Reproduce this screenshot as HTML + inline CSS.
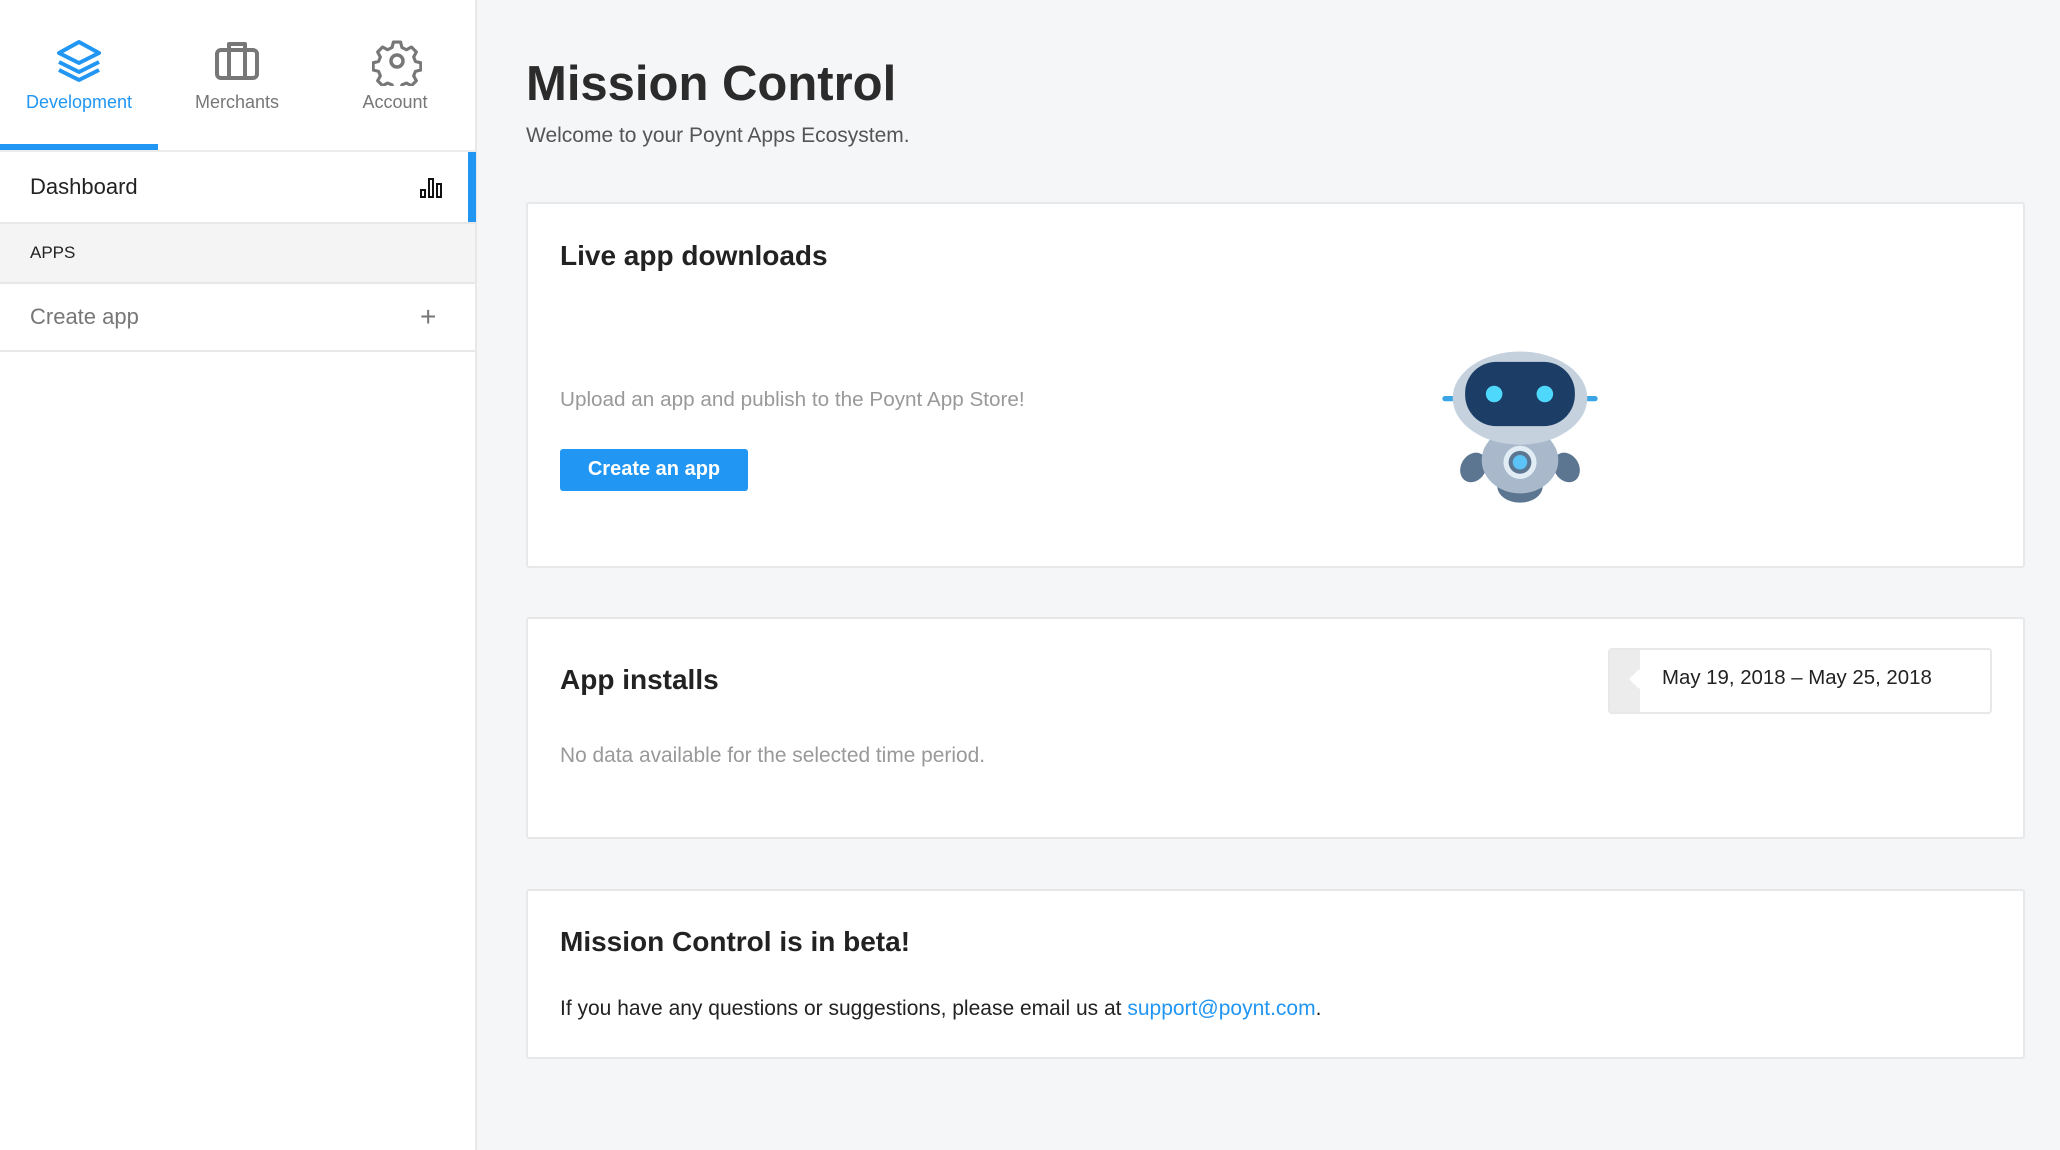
<!DOCTYPE html>
<html><head><meta charset="utf-8"><style>
*{box-sizing:border-box;margin:0;padding:0}
body{width:2060px;height:1150px;background:#f5f6f8;font-family:"Liberation Sans",sans-serif;position:relative;overflow:hidden;color:#222}
.side{position:absolute;left:0;top:0;width:477px;height:1150px;background:#fff;border-right:2px solid #e8e8e8}
.tab{position:absolute;top:0;width:158px;height:150px;text-align:center}
.tab span{position:absolute;top:92px;left:0;width:100%;font-size:18px;color:#777}
.tab svg{position:absolute;top:38px;left:56px}
.row{position:absolute;left:0;width:475px}
.card{position:absolute;left:526px;width:1499px;background:#fff;border:2px solid #e6e8ea;border-radius:3px}
h1{position:absolute;left:526px;top:56px;font-size:49px;font-weight:600;color:#2b2b2b}
h2{position:absolute;left:32px;font-size:28px;font-weight:600;color:#222}
p{position:absolute;left:32px;font-size:21px;color:#999}
</style></head><body>
<div class="side">
 <div class="tab" style="left:0"><svg width="46" height="46" viewBox="0 0 46 46" fill="none" stroke="#2196f3" stroke-width="4" stroke-linejoin="round"><path d="M23 4 L43 15 L23 25 L3 15Z"/><path d="M3 24 L23 34 L43 24"/><path d="M3 32 L23 42 L43 32"/></svg><span style="color:#2196f3">Development</span></div>
 <div style="position:absolute;left:0;top:144px;width:158px;height:6px;background:#2196f3"></div>
 <div class="tab" style="left:158px"><svg width="46" height="46" viewBox="0 0 46 46" fill="none" stroke="#777" stroke-width="4" stroke-linejoin="round"><rect x="3" y="12" width="40" height="28" rx="4"/><path d="M15 12V6h16v6M15 12v28M31 12v28"/></svg><span>Merchants</span></div>
 <div class="tab" style="left:316px"><svg width="50" height="50" viewBox="0 0 50 50" fill="none" stroke="#777" stroke-width="3.5" stroke-linejoin="round" style="left:56px;top:36px"><circle cx="25" cy="25" r="6"/><path d="M21 4h8l1.5 6 5 2.5 5.5-3 5.5 5.5-3 5.5 2 5 6 1.5v8l-6 1.5-2 5 3 5.5-5.5 5.5-5.5-3-5 2-1.5 6h-8l-1.5-6-5-2-5.5 3-5.5-5.5 3-5.5-2-5-6-1.5v-8l6-1.5 2-5-3-5.5 5.5-5.5 5.5 3 5-2.5z" transform="translate(2.5 2.5) scale(0.9)"/></svg><span>Account</span></div>
 <div class="row" style="top:150px;height:2px;background:#ececec"></div>
 <div class="row" style="top:152px;height:70px;font-size:22px;line-height:70px;padding-left:30px;color:#222">Dashboard
  <svg style="position:absolute;left:420px;top:26px" width="24" height="20" viewBox="0 0 24 20" fill="none" stroke="#111" stroke-width="2"><rect x="1" y="12" width="4" height="7"/><rect x="9" y="1" width="4" height="18"/><rect x="17" y="6" width="4" height="13"/></svg>
  <div style="position:absolute;left:468px;top:0;width:8px;height:70px;background:#2196f3"></div></div>
 <div class="row" style="top:222px;height:62px;background:#f4f4f4;border-top:2px solid #e8e8e8;border-bottom:2px solid #e8e8e8;font-size:17px;line-height:58px;padding-left:30px;color:#222">APPS</div>
 <div class="row" style="top:284px;height:68px;border-bottom:2px solid #e8e8e8;font-size:22px;line-height:66px;padding-left:30px;color:#777">Create app<span style="position:absolute;left:420px;font-size:28px;color:#777">+</span></div>
</div>
<h1>Mission Control</h1>
<div style="position:absolute;left:526px;top:124px;font-size:21px;color:#555">Welcome to your Poynt Apps Ecosystem.</div>
<div class="card" style="top:202px;height:366px">
 <h2 style="top:36px">Live app downloads</h2>
 <p style="top:184px;font-size:20.7px">Upload an app and publish to the Poynt App Store!</p>
 <div style="position:absolute;left:32px;top:245px;width:188px;height:42px;background:#2196f3;border-radius:3px;color:#fff;font-size:20px;font-weight:600;text-align:center;line-height:40px">Create an app</div>
 <svg style="position:absolute;left:904px;top:136px" width="176" height="168" viewBox="0 0 170 160">
  <rect x="10" y="53" width="20" height="5" rx="2.5" fill="#3aa5e5"/><rect x="140" y="53" width="20" height="5" rx="2.5" fill="#3aa5e5"/>
  <ellipse cx="63" cy="105" rx="10" ry="14" fill="#5c7590"/><ellipse cx="107" cy="105" rx="10" ry="14" fill="#5c7590"/>
  <ellipse cx="40" cy="122" rx="12" ry="15" fill="#5c7590" transform="rotate(30 40 122)"/><ellipse cx="130" cy="122" rx="12" ry="15" fill="#5c7590" transform="rotate(-30 130 122)"/>
  <ellipse cx="85" cy="140" rx="22" ry="16" fill="#5c7590"/>
  <ellipse cx="85" cy="115" rx="37" ry="32" fill="#a9b9cb"/>
  <circle cx="85" cy="117" r="16" fill="#e2ecf5"/><circle cx="85" cy="117" r="11" fill="#5c7590"/><circle cx="85" cy="117" r="7" fill="#5cc3f7"/>
  <ellipse cx="85" cy="55" rx="65" ry="45" fill="#c5d2de"/>
  <rect x="32" y="20" width="106" height="62" rx="30" fill="#1c3d66"/>
  <circle cx="60" cy="51" r="8" fill="#4ed8fb"/><circle cx="109" cy="51" r="8" fill="#4ed8fb"/>
 </svg>
</div>
<div class="card" style="top:617px;height:222px">
 <h2 style="top:45px">App installs</h2>
 <p style="top:125px;font-size:20.9px">No data available for the selected time period.</p>
 <div style="position:absolute;left:1080px;top:29px;width:384px;height:66px;border:2px solid #e8e8e8;border-radius:4px;background:#fff;overflow:hidden">
  <div style="position:absolute;left:0;top:0;width:30px;height:66px;background:#ececec"></div>
  <div style="position:absolute;left:22px;top:22px;width:14px;height:14px;background:#fff;transform:rotate(45deg)"></div>
  <div style="position:absolute;left:52px;top:17px;font-size:20.4px;color:#222">May 19, 2018 – May 25, 2018</div>
 </div>
</div>
<div class="card" style="top:889px;height:170px">
 <h2 style="top:35px">Mission Control is in beta!</h2>
 <p style="top:106px;color:#222">If you have any questions or suggestions, please email us at <span style="color:#2196f3">support@poynt.com</span>.</p>
</div>
</body></html>
